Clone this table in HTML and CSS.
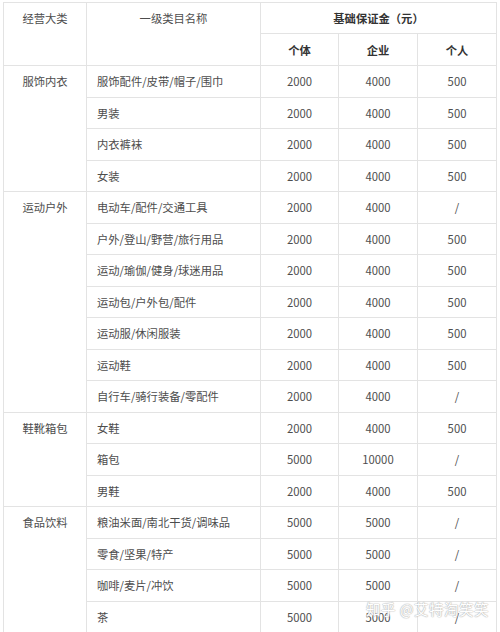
FILE: index.html
```html
<!DOCTYPE html>
<html lang="zh-CN">
<head>
<meta charset="utf-8">
<link rel="stylesheet" href="styles.css">
</head>
<body>
<div class="page">
<table class="fee">
  <colgroup>
    <col class="c1"><col class="c2"><col class="c3"><col class="c4"><col class="c5">
  </colgroup>
  <thead>
    <tr class="h1">
      <th rowspan="2" class="top">经营大类</th>
      <th rowspan="2" class="top">一级类目名称</th>
      <th colspan="3" class="bold">基础保证金（元）</th>
    </tr>
    <tr class="h2">
      <th class="bold">个体</th>
      <th class="bold">企业</th>
      <th class="bold">个人</th>
    </tr>
  </thead>
  <tbody>
    <tr><td rowspan="4" class="cat">服饰内衣</td><td class="name">服饰配件/皮带/帽子/围巾</td><td>2000</td><td>4000</td><td>500</td></tr>
    <tr><td class="name">男装</td><td>2000</td><td>4000</td><td>500</td></tr>
    <tr><td class="name">内衣裤袜</td><td>2000</td><td>4000</td><td>500</td></tr>
    <tr><td class="name">女装</td><td>2000</td><td>4000</td><td>500</td></tr>
    <tr><td rowspan="7" class="cat">运动户外</td><td class="name">电动车/配件/交通工具</td><td>2000</td><td>4000</td><td>/</td></tr>
    <tr><td class="name">户外/登山/野营/旅行用品</td><td>2000</td><td>4000</td><td>500</td></tr>
    <tr><td class="name">运动/瑜伽/健身/球迷用品</td><td>2000</td><td>4000</td><td>500</td></tr>
    <tr><td class="name">运动包/户外包/配件</td><td>2000</td><td>4000</td><td>500</td></tr>
    <tr><td class="name">运动服/休闲服装</td><td>2000</td><td>4000</td><td>500</td></tr>
    <tr><td class="name">运动鞋</td><td>2000</td><td>4000</td><td>500</td></tr>
    <tr><td class="name">自行车/骑行装备/零配件</td><td>2000</td><td>4000</td><td>/</td></tr>
    <tr><td rowspan="3" class="cat">鞋靴箱包</td><td class="name">女鞋</td><td>2000</td><td>4000</td><td>500</td></tr>
    <tr><td class="name">箱包</td><td>5000</td><td>10000</td><td>/</td></tr>
    <tr><td class="name">男鞋</td><td>2000</td><td>4000</td><td>500</td></tr>
    <tr><td rowspan="4" class="cat">食品饮料</td><td class="name">粮油米面/南北干货/调味品</td><td>5000</td><td>5000</td><td>/</td></tr>
    <tr><td class="name">零食/坚果/特产</td><td>5000</td><td>5000</td><td>/</td></tr>
    <tr><td class="name">咖啡/麦片/冲饮</td><td>5000</td><td>5000</td><td>/</td></tr>
    <tr><td class="name">茶</td><td>5000</td><td>5000</td><td>/</td></tr>
  </tbody>
</table>
<div class="watermark">知乎 @艾特淘笑笑</div>
</div>
</body>
</html>
```
FILE: styles.css
```css
html, body {
  margin: 0;
  padding: 0;
  background: #ffffff;
}
body {
  width: 500px;
  height: 632px;
  overflow: hidden;
}
.page {
  position: relative;
  padding: 2px 0 0 3px;
  font-family: "Noto Sans CJK SC", "Microsoft YaHei", sans-serif;
  font-size: 11.3px;
  color: #4d4d4d;
}
.fee {
  border-collapse: collapse;
  table-layout: fixed;
  width: 493px;
}
.c1 { width: 83px; }
.c2 { width: 174px; }
.c3 { width: 78px; }
.c4 { width: 79px; }
.c5 { width: 79px; }
.fee th, .fee td {
  border: 1px solid #e3e3e3;
  padding: 0;
  line-height: 16px;
  text-align: center;
  vertical-align: middle;
  font-weight: normal;
}
.fee .h1 { height: 31px; }
.fee .h2 { height: 32px; }
.fee tbody tr { height: 31.5px; }
.fee th.top {
  vertical-align: top;
  padding-top: 7px;
}
.fee th.bold {
  font-weight: bold;
  color: #333333;
}
.fee td.cat {
  vertical-align: top;
  padding-top: 7px;
}
.fee td.name {
  text-align: left;
  padding-left: 10px;
}
.watermark {
  position: absolute;
  left: 366px;
  top: 600px;
  font-size: 14.5px;
  line-height: 18px;
  color: #ffffff;
  letter-spacing: 0.5px;
  text-shadow: 0 0 1px #b4b4b4, 0 0 1px #b4b4b4, 0 0 2px #d0d0d0;
}
```
